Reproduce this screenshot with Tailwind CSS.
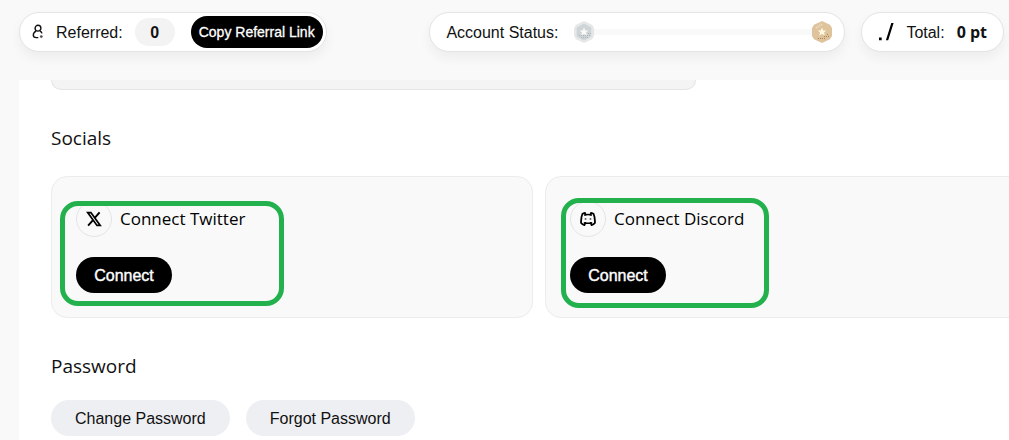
<!DOCTYPE html>
<html lang="en">
<head>
  <meta charset="UTF-8">
  <meta name="viewport" content="width=device-width, initial-scale=1.0">
  <title>Account Settings</title>
  <script src="https://cdn.jsdelivr.net/npm/@tailwindcss/browser@4"></script>
</head>
<body class="bg-[#f9f9f9] text-[#111] font-['Liberation_Sans',Arial,sans-serif] min-h-screen overflow-x-hidden">

  <!-- Top bar -->
  <header class="flex items-start h-20 pt-3 pl-[19px] pr-[5px]">
    <div class="flex items-center h-10 pl-3 pr-[3px] bg-white border border-[#e4e4e6] rounded-full shadow-[0_6px_12px_rgba(0,0,0,0.05)]">
      <svg class="w-3 h-4 shrink-0" viewBox="0 0 12 16" fill="none" stroke="#111" stroke-width="1.4">
        <circle cx="6" cy="4.2" r="2.9"/>
        <path d="M4 7.1C2.2 8 1.3 9.600 1.300 11c0 1.700 1.300 2.600 3 2.600h2M8 7.200c1 .5 1.700 1.300 2 2.200"/>
        <circle cx="9.300" cy="12.600" r="1.400" fill="#555" stroke="none"/>
      </svg>
      <span class="ml-3 pt-0.5">Referred:</span>
      <span class="ml-3 w-10 h-7 pt-0.5 flex items-center justify-center rounded-full bg-[#f3f3f3] font-bold">0</span>
      <button type="button" class="ml-4 h-8 px-2 rounded-full bg-black text-white text-sm whitespace-nowrap [-webkit-text-stroke:0.3px_white]">Copy Referral Link</button>
    </div>

    <div class="ml-auto flex items-center w-[416px] h-10 pl-4 pr-3 bg-white border border-[#e4e4e6] rounded-full shadow-[0_6px_12px_rgba(0,0,0,0.05)]">
      <span class="pt-0.5 whitespace-nowrap">Account Status:</span>
      <svg class="ml-4 w-5 h-[22px] shrink-0" viewBox="0 0 20 22">
        <path d="M10 0l8 3.8 2 3.2v8l-2 3.2L10 22l-8-3.8L0 15V7l2-3.2z" fill="#e6e8e8"/>
        <path d="M10 2.5l7.3 4v9l-7.3 4-7.3-4v-9z" fill="#cfd5d7"/>
        <path d="M10 6.5l1.3 2.9 3 .2-2.3 2 .8 3-2.8-1.6-2.8 1.6.8-3-2.3-2 3-.2z" fill="#f8fafa"/>
        <path d="M5 14.5h11M7 16.5h7M14 12.5h3" stroke="#acb5b7" stroke-dasharray="1 1"/>
      </svg>
      <div class="flex-1 h-1.5 bg-[#f9f9f9]"></div>
      <svg class="w-5 h-[22px] shrink-0" viewBox="0 0 20 22">
        <path d="M10 0l8 3.8 2 3.2v8l-2 3.2L10 22l-8-3.8L0 15V7l2-3.2z" fill="#dec39c"/>
        <path d="M4 7l6-4" stroke="#efe2cd" stroke-width="2" stroke-dasharray="1 1"/>
        <path d="M10 6.5l1.3 2.9 3 .2-2.3 2 .8 3-2.8-1.6-2.8 1.6.8-3-2.3-2 3-.2z" fill="#fff8df"/>
        <path d="M6 17.5h8M12 15.5h5M15 13.5h2" stroke="#a98351" stroke-dasharray="1 1"/>
      </svg>
    </div>

    <div class="ml-4 flex items-center h-10 pl-4 pr-4 bg-white border border-[#e4e4e6] rounded-full shadow-[0_6px_12px_rgba(0,0,0,0.05)]">
      <svg class="w-4 h-5 shrink-0" viewBox="0 0 16 20">
        <path d="M1 15.5h2.7v2.7H1zM13.3 1h2.3L10.2 18.2H7.9z" fill="#000"/>
      </svg>
      <span class="ml-3 pt-0.5">Total:</span>
      <span class="ml-3 font-['Open_Sans',sans-serif] font-bold whitespace-nowrap">0 pt</span>
    </div>
  </header>

  <!-- Settings -->
  <main class="ml-[19px] pl-8 bg-white overflow-hidden">
    <div class="w-[645px] h-2.5 border border-t-0 border-[#e4e4e4] rounded-b-2xl bg-[#f4f4f4]"></div>

    <section class="pt-8">
      <h2 class="h-8 leading-8 text-[19px] font-['Open_Sans',sans-serif]">Socials</h2>
      <div class="mt-[22px] -mr-[18px] grid grid-cols-2 gap-3">

        <div class="relative p-6 border border-[#ececec] rounded-2xl bg-[#f9f9f9]">
          <div class="flex items-center gap-2">
            <span class="w-9 h-9 flex items-center justify-center border border-[#e4e4e4] rounded-full">
              <svg class="w-4 h-4" viewBox="0 0 16 16" fill="none" stroke="#000">
                <path d="M13.6 1.3L9 6.7M6.8 9.3l-4.700 5.400" stroke-width="1.9"/>
                <path d="M1.700 1.600h3.200l9.300 12.800H11z" stroke-width="1.700"/>
              </svg>
            </span>
            <span class="text-[17px] leading-9 font-['Open_Sans',sans-serif] text-black">Connect Twitter</span>
          </div>
          <button type="button" class="mt-5 block w-24 h-9 pt-0.5 rounded-full bg-black text-white [-webkit-text-stroke:0.4px_white]">Connect</button>
          <div class="absolute left-2 top-6 w-56 h-[105px] border-5 border-[#22b14c] rounded-[18px] pointer-events-none"></div>
        </div>

        <div class="relative p-6 border border-[#ececec] rounded-2xl bg-[#f9f9f9]">
          <div class="flex items-center gap-2">
            <span class="w-9 h-9 flex items-center justify-center border border-[#e4e4e4] rounded-full">
              <svg class="w-4 h-4" viewBox="0 0 16 16" fill="none" stroke="#000" stroke-width="1.8" stroke-linejoin="round" stroke-linecap="round">
                <path d="M5.600 3.500L5 1.900C3.900 2 3 2.400 2.400 3 1.300 5.500.9 8.500 1.100 12c.9 1.100 2 1.700 3.300 2l1-2.100"/>
                <path d="M10.400 3.500l.6-1.600c1.100.1 2 .5 2.600 1.100 1.100 2.500 1.500 5.500 1.300 9-.9 1.100-2 1.700-3.300 2l-1-2.100"/>
                <path d="M4.600 4q3.400-1 6.800 0M4.400 11.800q3.600 1 7.200 0" stroke-width="1.400"/>
                <path d="M5.500 7.900h.1M10.400 7.900h.1" stroke="#555"/>
              </svg>
            </span>
            <span class="text-[17px] leading-9 font-['Open_Sans',sans-serif] text-black">Connect Discord</span>
          </div>
          <button type="button" class="mt-5 block w-24 h-9 pt-0.5 rounded-full bg-black text-white [-webkit-text-stroke:0.4px_white]">Connect</button>
          <div class="absolute left-[15px] top-[21px] w-52 h-[110px] border-5 border-[#22b14c] rounded-[18px] pointer-events-none"></div>
        </div>

      </div>
    </section>

    <section class="pt-8 pb-1">
      <h2 class="h-8 leading-8 text-[19px] font-['Open_Sans',sans-serif]">Password</h2>
      <div class="mt-[18px] flex gap-4">
        <button type="button" class="h-9 px-6 pt-0.5 rounded-full bg-[#eeeff3]">Change Password</button>
        <button type="button" class="h-9 px-6 pt-0.5 rounded-full bg-[#eeeff3]">Forgot Password</button>
      </div>
    </section>
  </main>

</body>
</html>
